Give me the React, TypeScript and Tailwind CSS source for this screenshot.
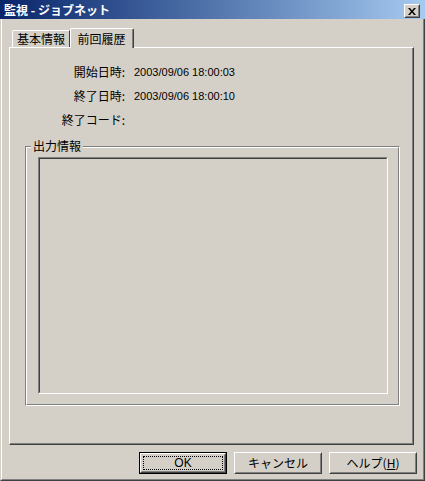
import React from 'react';

const jp = { fontFamily: '"Noto Sans CJK JP", "Liberation Sans", sans-serif' };
const latin = { fontFamily: '"Liberation Sans", "Noto Sans CJK JP", sans-serif' };

function Raised({ children, className = '' }: { children?: React.ReactNode; className?: string }) {
  return (
    <div className={`border border-t-white border-l-white border-r-[#404040] border-b-[#404040] ${className}`}>
      <div className="w-full h-full border border-t-[#d4d0c8] border-l-[#d4d0c8] border-r-[#808080] border-b-[#808080] flex items-center justify-center">
        {children}
      </div>
    </div>
  );
}

function Btn({ children, isDefault }: { children: React.ReactNode; isDefault?: boolean }) {
  if (isDefault) {
    return (
      <div className="w-[88px] h-[22px] border border-black">
        <Raised className="w-full h-full">
          <div className="w-[80px] h-[14px] border border-dotted border-black flex items-center justify-center text-[12px] text-black leading-none" style={latin}>
            {children}
          </div>
        </Raised>
      </div>
    );
  }
  return (
    <Raised className="w-[88px] h-[22px]">
      <span className="text-[12px] text-black leading-none" style={jp}>
        {children}
      </span>
    </Raised>
  );
}

function InfoRow({ label, value }: { label: string; value?: string }) {
  return (
    <div className="flex h-[24px] items-center">
      <div className="w-[115px] text-right text-[12px] text-black" style={jp}>
        {label}
      </div>
      <div className="ml-[9px] text-[11px] text-black" style={latin}>
        {value}
      </div>
    </div>
  );
}

export default function App() {
  return (
    <div className="w-[425px] h-[481px] bg-[#d4d0c8] flex flex-col overflow-hidden select-none">
      {/* title bar */}
      <div className="h-[19px] shrink-0 flex bg-gradient-to-r from-[#0a246a] to-[#a6caf0] pr-[5px]">
        <div className="flex-1 pl-[4px] flex items-center text-[12px] font-bold text-white leading-none" style={jp}>
          監視 - ジョブネット
        </div>
        <Raised className="w-[16px] h-[14px] self-end mb-[1px] bg-[#d4d0c8]">
          <svg width="8" height="7" viewBox="0 0 8 7">
            <path d="M0 0h2l2 2.5L6 0h2L5 3.5 8 7H6L4 4.5 2 7H0l3-3.5z" fill="#000" />
          </svg>
        </Raised>
      </div>

      {/* body */}
      <div className="flex-1 flex border-l border-r border-b border-l-[#d4d0c8] border-r-[#404040] border-b-[#404040]">
        <div className="flex-1 flex flex-col border-l border-r border-b border-l-white border-r-[#808080] border-b-[#808080] pt-[9px] pl-[7px] pr-[7px]">
          {/* tabs */}
          <div className="h-[19px] flex items-start pl-[3px]">
            <div
              className="mt-[2px] w-[58px] h-[17px] flex items-center justify-center border-t border-l border-r border-t-white border-l-white border-r-[#404040] rounded-tl-[2px] text-[12px] text-black"
              style={jp}
            >
              基本情報
            </div>
            <div className="relative z-10 w-[64px] h-[20px] bg-[#d4d0c8] flex border-t border-l border-r border-t-white border-l-white border-r-[#404040] rounded-tl-[2px] rounded-tr-[2px]">
              <div className="flex-1 flex items-start justify-center pt-[1px] border-r border-r-[#808080] text-[12px] text-black" style={jp}>
                前回履歴
              </div>
            </div>
          </div>

          {/* panel */}
          <div className="w-[405px] h-[398px] flex border border-t-white border-l-white border-r-[#404040] border-b-[#404040]">
            <div className="flex-1 flex flex-col border-r border-b border-r-[#808080] border-b-[#808080] pt-[12px]">
              <InfoRow label="開始日時:" value="2003/09/06 18:00:03" />
              <InfoRow label="終了日時:" value="2003/09/06 18:00:10" />
              <InfoRow label="終了コード:" />

              {/* group box */}
              <div className="relative mt-[14px] ml-[15px] w-[375px] h-[260px] border border-t-[#808080] border-l-[#808080] border-r-white border-b-white">
                <div className="w-full h-full border border-t-white border-l-white border-r-[#808080] border-b-[#808080] pt-[9px] pl-[11px]">
                  <div className="w-[350px] h-[237px] border border-t-[#808080] border-l-[#808080] border-r-white border-b-white">
                    <div className="w-full h-full border border-t-[#404040] border-l-[#404040] border-r-[#d4d0c8] border-b-[#d4d0c8] bg-[#d4d0c8]" />
                  </div>
                </div>
                <span
                  className="absolute left-[5px] top-[-8px] px-[2px] bg-[#d4d0c8] text-[12px] leading-[14px] text-black"
                  style={jp}
                >
                  出力情報
                </span>
              </div>
            </div>
          </div>

          {/* buttons */}
          <div className="mt-[7px] flex justify-end gap-[7px] mr-[-1px]">
            <Btn isDefault>OK</Btn>
            <Btn>キャンセル</Btn>
            <Btn>
              ヘルプ(<span className="underline">H</span>)
            </Btn>
          </div>
        </div>
      </div>
    </div>
  );
}
